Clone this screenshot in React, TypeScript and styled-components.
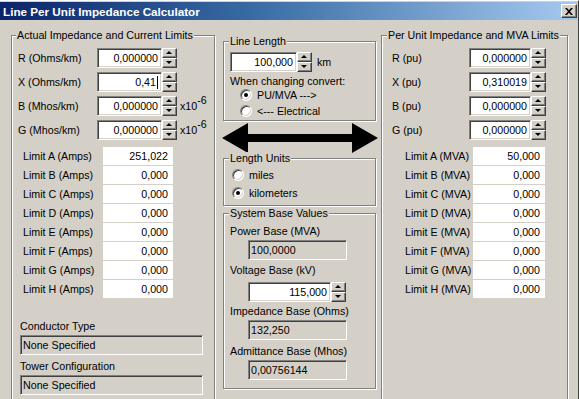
import React from 'react';
import styled, { createGlobalStyle } from 'styled-components';

const GlobalStyle = createGlobalStyle`
  html, body { margin: 0; padding: 0; background: #d4d0c8; }
  body {
    font-family: "Liberation Sans", Arial, sans-serif;
    font-size: 10.7px;
    color: #000;
  }
`;

const Window = styled.div`
  box-sizing: border-box;
  width: 579px;
  height: 399px;
  overflow: hidden;
  background: #d4d0c8;
  border-top: 1px solid #ffffff;
  border-right: 1px solid #404040;
  padding-top: 1px;
  display: flex;
  flex-direction: column;
`;

const TitleBar = styled.div`
  height: 18px;
  flex-shrink: 0;
  background: linear-gradient(to right, #0a246a 0%, #3a6ea5 45%, #a6caf0 100%);
  display: flex;
  align-items: center;
  justify-content: space-between;
  padding: 0 1px 0 3px;
`;

const TitleText = styled.span`
  color: #fff;
  font-weight: bold;
  font-size: 11.7px;
  white-space: nowrap;
`;

const CloseButton = styled.div`
  box-sizing: border-box;
  width: 16px;
  height: 14px;
  background: #d4d0c8;
  border: 1px solid;
  border-color: #fff #404040 #404040 #fff;
  box-shadow: inset -1px -1px 0 #808080;
  display: flex;
  align-items: center;
  justify-content: center;
`;

const Body = styled.div`
  display: flex;
  align-items: flex-start;
  padding: 15px 0 0 11px;
`;

const Group = styled.div<{ $w: number; $h: number; $mt?: number; $ml?: number }>`
  box-sizing: border-box;
  flex-shrink: 0;
  width: ${p => p.$w}px;
  height: ${p => p.$h}px;
  margin-top: ${p => p.$mt ?? 0}px;
  margin-left: ${p => p.$ml ?? 0}px;
  border: 1px solid #808080;
  box-shadow: inset 1px 1px 0 #fff, 1px 1px 0 #fff;
  display: flex;
  flex-direction: column;
  align-items: flex-start;
`;

const Legend = styled.div<{ $ml?: number }>`
  margin: -7px 0 0 ${p => p.$ml ?? 4}px;
  padding: 0 1px;
  height: 13px;
  line-height: 13px;
  background: #d4d0c8;
  white-space: nowrap;
`;

const Column = styled.div<{ $mt: number; $ml: number; $w: number }>`
  display: flex;
  flex-direction: column;
  flex-shrink: 0;
  width: ${p => p.$w}px;
  margin-top: ${p => p.$mt}px;
  margin-left: ${p => p.$ml}px;
`;

const FieldRow = styled.div<{ $mt?: number; $pl: number }>`
  display: flex;
  align-items: center;
  height: 20px;
  margin-top: ${p => p.$mt ?? 0}px;
  padding-left: ${p => p.$pl}px;
`;

const FieldLabel = styled.span<{ $w: number }>`
  width: ${p => p.$w}px;
  flex-shrink: 0;
  white-space: nowrap;
`;

const TextBox = styled.div<{ $w: number; $readOnly?: boolean; $left?: boolean; $ml?: number; $mt?: number }>`
  box-sizing: border-box;
  flex-shrink: 0;
  width: ${p => p.$w}px;
  height: 20px;
  margin-left: ${p => p.$ml ?? 0}px;
  margin-top: ${p => p.$mt ?? 0}px;
  background: ${p => (p.$readOnly ? '#d4d0c8' : '#ffffff')};
  border: 1px solid;
  border-color: #808080 #ffffff #ffffff #808080;
  box-shadow: inset 1px 1px 0 #404040, inset -1px -1px 0 #d4d0c8;
  display: flex;
  align-items: center;
  justify-content: ${p => (p.$left ? 'flex-start' : 'flex-end')};
  padding: ${p => (p.$left ? '0 0 0 2px' : '0 3px 0 0')};
  white-space: nowrap;
`;

const Caret = styled.span`
  display: inline-block;
  width: 1px;
  height: 13px;
  margin-left: 1px;
  background: #000;
`;

const Spin = styled.div`
  display: flex;
  flex-direction: column;
  width: 15px;
  height: 20px;
  flex-shrink: 0;
`;

const SpinButton = styled.div`
  box-sizing: border-box;
  height: 10px;
  background: #d4d0c8;
  border: 1px solid;
  border-color: #ffffff #404040 #404040 #ffffff;
  box-shadow: inset -1px -1px 0 #808080;
  display: flex;
  align-items: center;
  justify-content: center;
`;

const Tri = styled.span<{ $down?: boolean }>`
  width: 0;
  height: 0;
  border-left: 3px solid transparent;
  border-right: 3px solid transparent;
  ${p => (p.$down ? 'border-top: 3px solid #000;' : 'border-bottom: 3px solid #000;')}
  margin-left: -1px;
  margin-top: -1px;
`;

const Unit = styled.span<{ $ml?: number }>`
  margin-left: ${p => p.$ml ?? 3}px;
  white-space: nowrap;
`;

const Sup = styled.span`
  position: relative;
  top: -6px;
`;

const LimitGrid = styled.div<{ $pl: number; $labelW: number; $cellW: number; $mt: number }>`
  display: grid;
  grid-template-columns: ${p => p.$labelW}px ${p => p.$cellW}px;
  grid-auto-rows: 18px;
  row-gap: 1px;
  padding-left: ${p => p.$pl}px;
  margin-top: ${p => p.$mt}px;
`;

const LimitLabel = styled.span`
  display: flex;
  align-items: center;
  white-space: nowrap;
`;

const LimitCell = styled.span`
  background: #ffffff;
  display: flex;
  align-items: center;
  justify-content: flex-end;
  padding-right: 5px;
`;

const TextLabel = styled.div<{ $mt: number; $pl: number }>`
  height: 13px;
  line-height: 13px;
  margin-top: ${p => p.$mt}px;
  padding-left: ${p => p.$pl}px;
  white-space: nowrap;
`;

const RadioRow = styled.div<{ $mt?: number; $pl: number }>`
  display: flex;
  align-items: center;
  height: 16px;
  gap: 5px;
  margin-top: ${p => p.$mt ?? 0}px;
  padding-left: ${p => p.$pl}px;
  white-space: nowrap;
`;

const RadioCircle = styled.span<{ $checked?: boolean }>`
  box-sizing: border-box;
  width: 12px;
  height: 12px;
  border-radius: 50%;
  background: #fff;
  border: 1px solid;
  border-color: #808080 #ffffff #ffffff #808080;
  box-shadow: inset 1px 1px 0 #404040, inset -1px -1px 0 #d4d0c8;
  display: flex;
  align-items: center;
  justify-content: center;
  flex-shrink: 0;
  &::after {
    content: '';
    width: 4px;
    height: 4px;
    border-radius: 50%;
    background: ${p => (p.$checked ? '#000' : 'transparent')};
  }
`;

const ArrowSvg = styled.svg`
  display: block;
  margin: 2px 0 0 -1px;
`;

const SpinBox: React.FC<{ w: number; value: React.ReactNode; ml?: number }> = ({ w, value, ml }) => (
  <>
    <TextBox $w={w} $ml={ml}>{value}</TextBox>
    <Spin>
      <SpinButton><Tri /></SpinButton>
      <SpinButton><Tri $down /></SpinButton>
    </Spin>
  </>
);

const leftRows = [
  { label: 'R (Ohms/km)', value: '0,000000', sup: false },
  { label: 'X (Ohms/km)', value: <>0,41<Caret /></>, sup: false },
  { label: 'B (Mhos/km)', value: '0,000000', sup: true },
  { label: 'G (Mhos/km)', value: '0,000000', sup: true },
];

const rightRows = [
  { label: 'R (pu)', value: '0,000000' },
  { label: 'X (pu)', value: '0,310019' },
  { label: 'B (pu)', value: '0,000000' },
  { label: 'G (pu)', value: '0,000000' },
];

const letters = ['A', 'B', 'C', 'D', 'E', 'F', 'G', 'H'];
const ampValues = ['251,022', '0,000', '0,000', '0,000', '0,000', '0,000', '0,000', '0,000'];
const mvaValues = ['50,000', '0,000', '0,000', '0,000', '0,000', '0,000', '0,000', '0,000'];

export default function App() {
  return (
    <>
      <GlobalStyle />
      <Window>
        <TitleBar>
          <TitleText>Line Per Unit Impedance Calculator</TitleText>
          <CloseButton>
            <svg width="8" height="7" viewBox="0 0 8 7">
              <path d="M0 0h2l2 2.2L6 0h2L5 3.5 8 7H6L4 4.8 2 7H0l3-3.5z" fill="#000" />
            </svg>
          </CloseButton>
        </TitleBar>
        <Body>
          <Group $w={204} $h={380}>
            <Legend>Actual Impedance and Current Limits</Legend>
            {leftRows.map((r, i) => (
              <FieldRow key={r.label} $pl={6} $mt={i === 0 ? 6 : 4}>
                <FieldLabel $w={79}>{r.label}</FieldLabel>
                <SpinBox w={65} value={r.value} />
                {r.sup && (
                  <Unit>
                    x10<Sup>-6</Sup>
                  </Unit>
                )}
              </FieldRow>
            ))}
            <LimitGrid $pl={11} $labelW={80} $cellW={70} $mt={7}>
              {letters.map((l, i) => (
                <React.Fragment key={l}>
                  <LimitLabel>Limit {l} (Amps)</LimitLabel>
                  <LimitCell>{ampValues[i]}</LimitCell>
                </React.Fragment>
              ))}
            </LimitGrid>
            <TextLabel $mt={22} $pl={8}>Conductor Type</TextLabel>
            <TextBox $w={183} $readOnly $left $ml={8} $mt={2}>None Specified</TextBox>
            <TextLabel $mt={5} $pl={8}>Tower Configuration</TextLabel>
            <TextBox $w={183} $readOnly $left $ml={8} $mt={2}>None Specified</TextBox>
          </Group>

          <Column $mt={6} $ml={8} $w={153}>
            <Group $w={153} $h={80}>
              <Legend $ml={5}>Line Length</Legend>
              <FieldRow $pl={6} $mt={4}>
                <SpinBox w={67} value="100,000" />
                <Unit $ml={5}>km</Unit>
              </FieldRow>
              <TextLabel $mt={3} $pl={6}>When changing convert:</TextLabel>
              <RadioRow $pl={16} $mt={-1}>
                <RadioCircle $checked />
                PU/MVA ---&gt;
              </RadioRow>
              <RadioRow $pl={16}>
                <RadioCircle />
                &lt;--- Electrical
              </RadioRow>
            </Group>

            <ArrowSvg width="156" height="30" viewBox="0 0 156 30">
              <polygon
                points="0,15 26,0 26,11 130,11 130,0 156,15 130,30 130,19 26,19 26,30"
                fill="#000"
              />
            </ArrowSvg>

            <Group $w={153} $h={48} $mt={5}>
              <Legend $ml={5}>Length Units</Legend>
              <RadioRow $pl={8} $mt={2}>
                <RadioCircle />
                miles
              </RadioRow>
              <RadioRow $pl={8} $mt={2}>
                <RadioCircle $checked />
                kilometers
              </RadioRow>
            </Group>

            <Group $w={153} $h={176} $mt={7}>
              <Legend $ml={5}>System Base Values</Legend>
              <TextLabel $mt={5} $pl={6}>Power Base (MVA)</TextLabel>
              <TextBox $w={99} $readOnly $left $ml={24} $mt={2}>100,0000</TextBox>
              <TextLabel $mt={4} $pl={6}>Voltage Base (kV)</TextLabel>
              <FieldRow $pl={24} $mt={5}>
                <SpinBox w={83} value="115,000" />
              </FieldRow>
              <TextLabel $mt={3} $pl={6}>Impedance Base (Ohms)</TextLabel>
              <TextBox $w={99} $readOnly $left $ml={24} $mt={2}>132,250</TextBox>
              <TextLabel $mt={5} $pl={6}>Admittance Base (Mhos)</TextLabel>
              <TextBox $w={99} $readOnly $left $ml={24} $mt={2}>0,00756144</TextBox>
            </Group>
          </Column>

          <Group $w={187} $h={380} $ml={5}>
            <Legend $ml={5}>Per Unit Impedance and MVA Limits</Legend>
            {rightRows.map((r, i) => (
              <FieldRow key={r.label} $pl={10} $mt={i === 0 ? 6 : 4}>
                <FieldLabel $w={77}>{r.label}</FieldLabel>
                <SpinBox w={62} value={r.value} />
              </FieldRow>
            ))}
            <LimitGrid $pl={23} $labelW={68} $cellW={72} $mt={7}>
              {letters.map((l, i) => (
                <React.Fragment key={l}>
                  <LimitLabel>Limit {l} (MVA)</LimitLabel>
                  <LimitCell>{mvaValues[i]}</LimitCell>
                </React.Fragment>
              ))}
            </LimitGrid>
          </Group>
        </Body>
      </Window>
    </>
  );
}
